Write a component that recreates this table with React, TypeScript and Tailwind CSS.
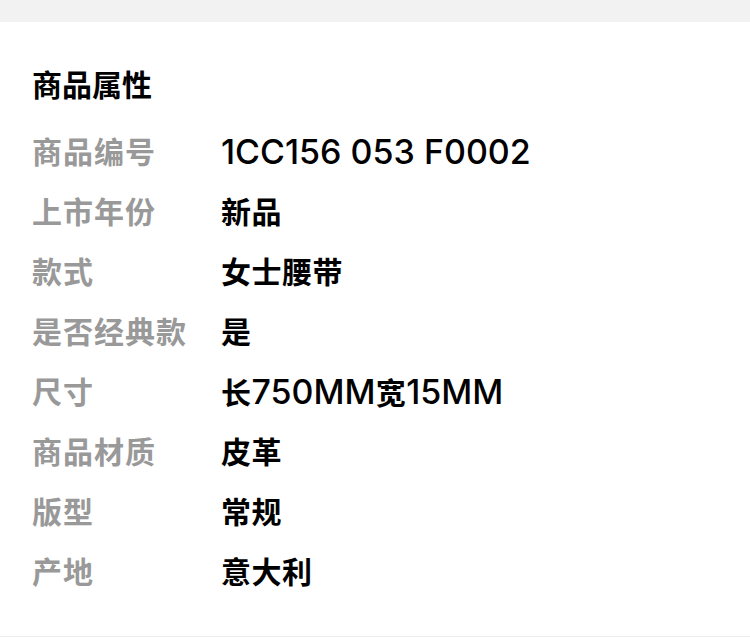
import React from "react";

const rows: [string, string][] = [
  ["商品编号", "1CC156 053 F0002"],
  ["上市年份", "新品"],
  ["款式", "女士腰带"],
  ["是否经典款", "是"],
  ["尺寸", "长750MM宽15MM"],
  ["商品材质", "皮革"],
  ["版型", "常规"],
  ["产地", "意大利"],
];

function Value({ text }: { text: string }) {
  const parts = text.split(/([\x00-\x7F]+)/).filter((p) => p.length > 0);
  return (
    <div className="flex items-baseline text-black leading-[30px] whitespace-pre">
      {parts.map((p, i) =>
        /^[\x00-\x7F]+$/.test(p) ? (
          <span key={i} className="text-[34px] font-medium">{p}</span>
        ) : (
          <span key={i} className="text-[30px] font-bold tracking-[0.5px]">{p}</span>
        )
      )}
    </div>
  );
}

export default function App() {
  return (
    <div
      className="w-[750px] h-[637px] bg-white flex flex-col"
      style={{ fontFamily: 'Inter, "Noto Sans CJK SC", sans-serif' }}
    >
      <div className="h-[22px] bg-[#f2f2f2]" />
      <div className="flex flex-col pl-[32px] pt-[48px] pb-[34px]">
        <div className="h-[30px] leading-[30px] text-[30px] font-bold text-black">商品属性</div>
        <div className="flex flex-col pt-[22px]">
          {rows.map(([k, v]) => (
            <div key={k} className="flex items-center h-[60px]">
              <div className="w-[189px] text-[30px] font-bold text-[#999999] leading-[30px] tracking-[1px]">{k}</div>
              <Value text={v} />
            </div>
          ))}
        </div>
      </div>
      <div className="h-px bg-[#eeeeee]" />
    </div>
  );
}
